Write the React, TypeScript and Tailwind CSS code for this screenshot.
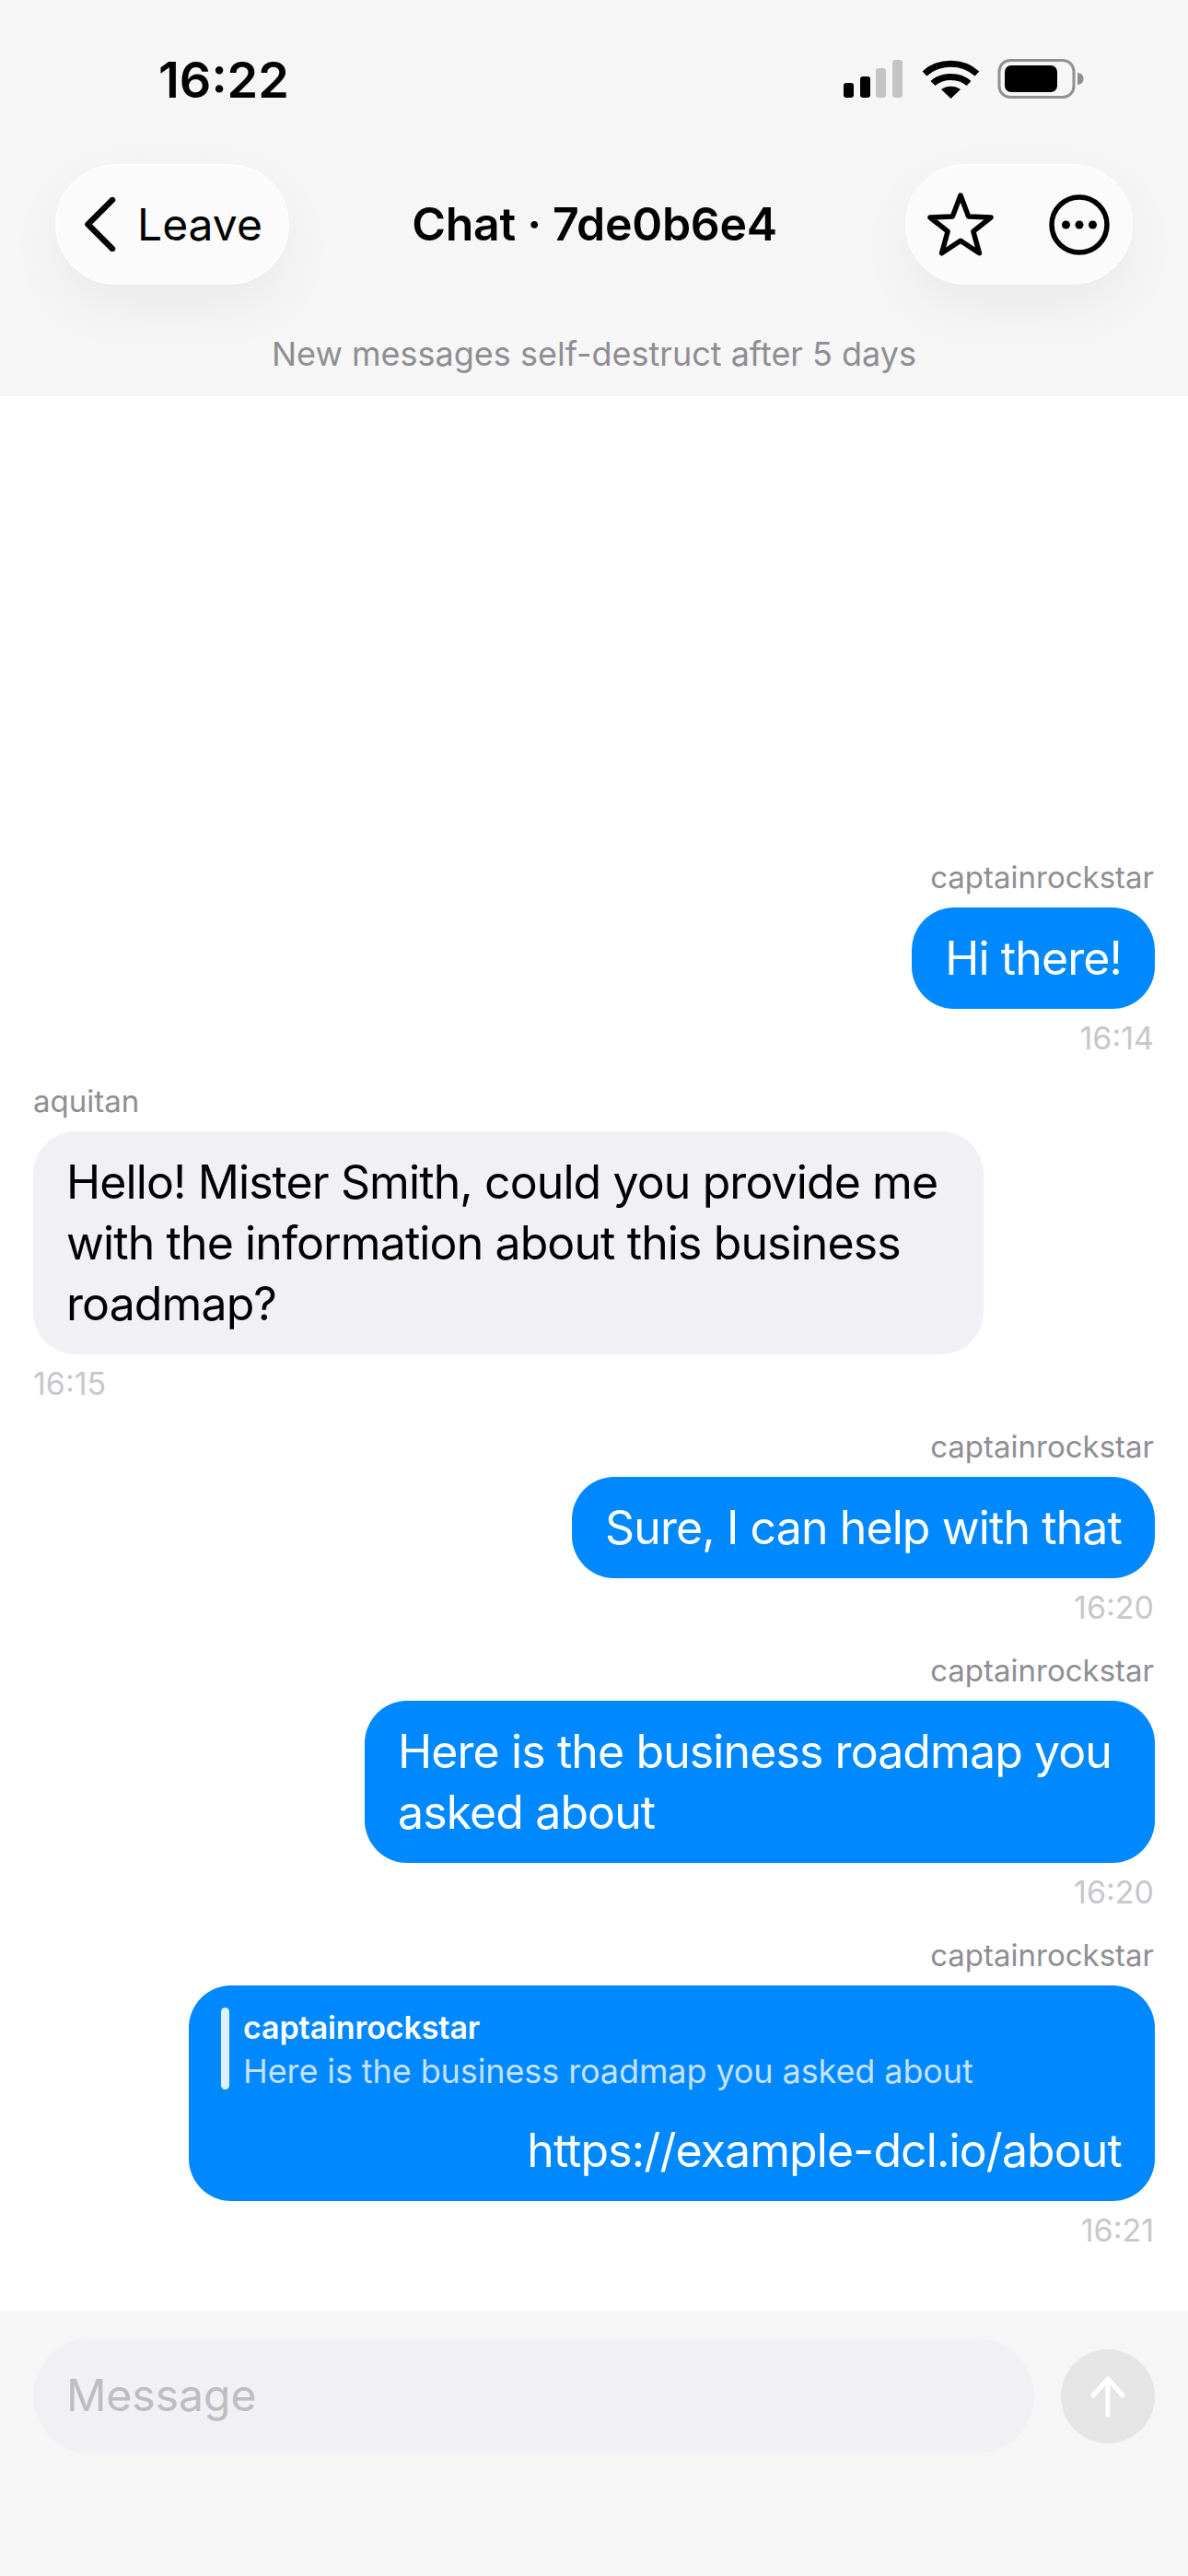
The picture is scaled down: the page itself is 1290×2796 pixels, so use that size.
type Message = {
  id: number;
  author: string;
  time: string;
  mine: boolean;
  lines: string;
};

const messages: Message[] = [
  { id: 1, author: "captainrockstar", time: "16:14", mine: true, lines: "Hi there!" },
  {
    id: 2,
    author: "aquitan",
    time: "16:15",
    mine: false,
    lines: "Hello! Mister Smith, could you provide me with the information about this business roadmap?",
  },
  { id: 3, author: "captainrockstar", time: "16:20", mine: true, lines: "Sure, I can help with that" },
  { id: 4, author: "captainrockstar", time: "16:20", mine: true, lines: "Here is the business roadmap you asked about" },
];

function StatusIcons() {
  return (
    <svg width="261" height="44" viewBox="0 0 261 44" fill="none">
      {/* signal */}
      <rect x="0" y="26" width="11" height="16" rx="3" fill="#000" />
      <rect x="18" y="19" width="11" height="23" rx="3" fill="#000" />
      <rect x="35" y="10" width="11" height="32" rx="3" fill="#c4c4c4" />
      <rect x="53" y="1" width="11" height="41" rx="3" fill="#c4c4c4" />
      {/* wifi */}
      <path d="M88 16C104 1.500 129 1.500 145 16" stroke="#000" strokeWidth="7" />
      <path d="M97 26.500C107 17 126 17 136 26.500" stroke="#000" strokeWidth="7" />
      <path d="M106 33C111.500 28.500 121.500 28.500 127 33L116.500 43Z" fill="#000" />
      {/* battery */}
      <rect x="169" y="1.500" width="81" height="40" rx="12" stroke="#909090" strokeWidth="3" />
      <rect x="175" y="7" width="57" height="29" rx="7" fill="#000" />
      <path d="M254 15C258.500 15.500 260.500 18 260.500 21.500C260.500 25 258.500 27.500 254 28Z" fill="#909090" />
    </svg>
  );
}

function Bubble({ message }: { message: Message }) {
  return (
    <div className={`flex flex-col ${message.mine ? "items-end" : "items-start"}`}>
      <div className={`mb-[13px] text-[33px] leading-[40px] text-[#8e8e93] ${message.mine ? "mr-[1px]" : ""}`}>
        {message.author}
      </div>
      <div
        className={`rounded-[46px] px-[36px] py-[22px] text-[50px] leading-[66px] tracking-[-0.9px] ${
          message.mine ? "max-w-[858px] bg-[#0088ff] text-white" : "max-w-[1032px] bg-[#f1f1f5] text-black"
        }`}
      >
        {message.lines}
      </div>
      <div className={`mt-[12px] text-[34px] leading-[40px] text-[#c7c7cc] ${message.mine ? "mr-[1px]" : ""}`}>
        {message.time}
      </div>
    </div>
  );
}

export default function App() {
  return (
    <div className="flex h-[2796px] w-[1290px] flex-col overflow-hidden bg-white font-[Inter,sans-serif]">
      <header className="flex h-[430px] flex-shrink-0 flex-col bg-[#f6f6f6]">
        <div className="flex h-[178px] items-start justify-between pl-[172px] pr-[113px] pt-[64px]">
          <span className="text-[54px] font-semibold leading-[46px] text-black">16:22</span>
          <StatusIcons />
        </div>
        <div className="flex h-[131px] items-center justify-between px-[60px]">
          <button
            type="button"
            className="flex h-[131px] w-[254px] items-center gap-[23px] rounded-full border-2 border-[#fdfdfd] bg-[#fbfbfb] pl-[29px] text-[48px] text-black shadow-[0_24px_60px_rgba(0,0,0,0.05)]"
          >
            <svg width="35" height="59" viewBox="0 0 35 59" fill="none">
              <path d="M31 3L4.500 29.500L31 56" stroke="#000" strokeWidth="6.500" strokeLinecap="round" strokeLinejoin="round" />
            </svg>
            <span>Leave</span>
          </button>
          <h1 className="mr-[6px] text-[50px] font-semibold tracking-[-0.3px] text-black">Chat · 7de0b6e4</h1>
          <div className="flex h-[131px] w-[247px] items-center justify-between rounded-full border-2 border-[#fdfdfd] bg-[#fbfbfb] pl-[22px] pr-[23px] shadow-[0_24px_60px_rgba(0,0,0,0.05)]">
            <svg width="72" height="69" viewBox="0 0 72 69" fill="none">
              <path
                d="M36 3L44.600 25.900L69 27L49.900 42.200L56.400 65.800L36 52.300L15.600 65.800L22.100 42.200L3 27L27.400 25.900Z"
                stroke="#000"
                strokeWidth="5.500"
                strokeLinejoin="round"
              />
            </svg>
            <svg width="66" height="66" viewBox="0 0 66 66" fill="none">
              <circle cx="33" cy="33" r="30" stroke="#000" strokeWidth="5.500" />
              <circle cx="18.500" cy="33" r="4.500" fill="#000" />
              <circle cx="33" cy="33" r="4.500" fill="#000" />
              <circle cx="47.500" cy="33" r="4.500" fill="#000" />
            </svg>
          </div>
        </div>
        <p className="mt-[53px] text-center text-[36px] leading-[44px] text-[#8e8e93]">
          New messages self-destruct after 5 days
        </p>
      </header>

      <main className="flex min-h-0 flex-1 flex-col justify-end gap-[28px] px-[36px] pb-[67px]">
        {messages.map((message) => (
          <Bubble key={message.id} message={message} />
        ))}

        <div className="flex flex-col items-end">
          <div className="mb-[13px] mr-[1px] text-[33px] leading-[40px] text-[#8e8e93]">captainrockstar</div>
          <div className="flex h-[234px] w-[1049px] flex-col rounded-[46px] bg-[#0088ff] pl-[35px] pr-[36px] pt-[24px] text-white">
            <div className="flex gap-[15px]">
              <div className="h-[89px] w-[9px] rounded-full bg-[#e0efff]" />
              <div className="flex flex-col">
                <span className="text-[34px] font-semibold leading-[44px] tracking-[-0.1px]">captainrockstar</span>
                <span className="mt-[3px] text-[36px] leading-[44px] tracking-[-0.1px] text-[#c4e1ff]">
                  Here is the business roadmap you asked about
                </span>
              </div>
            </div>
            <div className="mt-[32px] text-right text-[50px] leading-[65px] tracking-[-0.9px]">https://example-dcl.io/about</div>
          </div>
          <div className="mr-[1px] mt-[12px] text-[34px] leading-[40px] text-[#c7c7cc]">16:21</div>
        </div>
      </main>

      <footer className="flex h-[288px] flex-shrink-0 items-start gap-[29px] bg-[#f6f6f6] px-[36px] pt-[30px]">
        <input
          placeholder="Message"
          className="h-[125px] w-[1087px] rounded-[62px] bg-[#f1f1f5] px-[36px] pb-[2px] text-[48px] outline-none placeholder:text-[#bdbdc2]"
        />
        <button
          type="button"
          className="mt-[12px] flex h-[102px] w-[102px] flex-shrink-0 items-center justify-center rounded-full bg-[#e5e5e5]"
        >
          <svg width="38" height="46" viewBox="0 0 38 46" fill="none">
            <path d="M19 43V4M3 22L19 4L35 22" stroke="#fff" strokeWidth="5" strokeLinecap="round" strokeLinejoin="round" />
          </svg>
        </button>
      </footer>
    </div>
  );
}
